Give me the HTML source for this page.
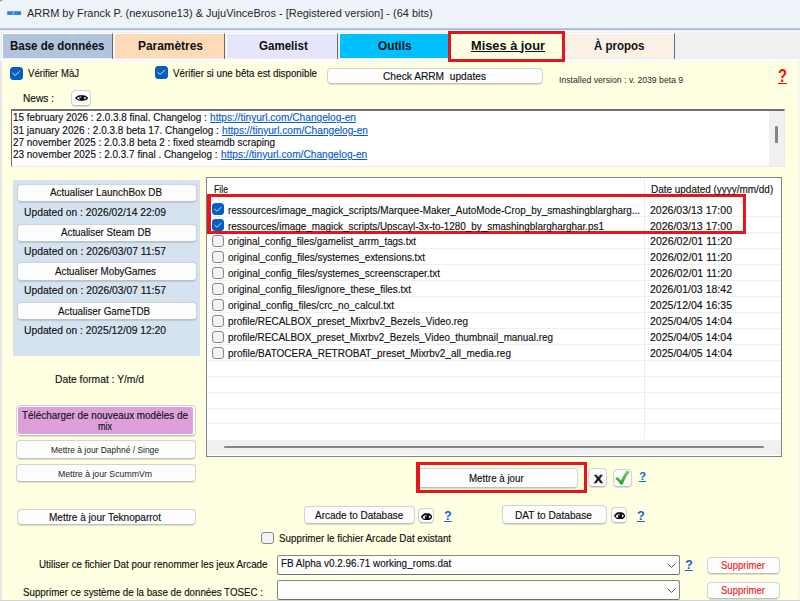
<!DOCTYPE html>
<html lang="fr"><head><meta charset="utf-8"><title>ARRM</title><style>
html,body{margin:0;padding:0;background:#ffffe1}
body{width:800px;height:601px;overflow:hidden;position:relative;background:#ffffe1;font-family:"Liberation Sans", Arial, sans-serif;color:#151515}
div{position:absolute}
.t{position:absolute;white-space:pre;transform-origin:0 50%;color:#101010;-webkit-text-stroke:0.16px currentColor}
.btn{background:#fdfdfd;border:1px solid #d3d3d3;border-bottom-color:#c0c0c0;border-radius:4.5px;box-sizing:border-box;box-shadow:0 0.6px 0.8px rgba(0,0,0,.13)}
.tab{box-sizing:border-box;border-right:1.5px solid #6a6a6a;border-left:1px solid #fff;border-top:1px solid #fff}
.cb{box-sizing:border-box;border:1px solid #878787;border-radius:3px;background:#f4f4f4}
.cb.on{background:#065fbe;border-color:#065fbe}
.cb svg{position:absolute;left:-1px;top:-1px}
</style></head>
<body>
<div class="" style="left:0px;top:0px;width:800px;height:28px;background:#eef3f9;"></div>
<div class="" style="left:0px;top:27.8px;width:800px;height:2.3px;background:linear-gradient(#c4d4ea,#a3bcde 45%,#a9c1e2);"></div>
<div class="" style="left:0px;top:30px;width:800px;height:32px;background:#f0f0f0;"></div>
<div class="" style="left:0px;top:31px;width:800px;height:1px;background:#fbfbfb;"></div>
<div class="" style="left:0px;top:61.5px;width:800px;height:539.5px;background:#ffffe1;"></div>
<div class="" style="left:0px;top:59px;width:800px;height:2.5px;background:#fafafa;"></div>
<div class="" style="left:0px;top:61px;width:2.8px;height:540px;background:linear-gradient(90deg,#e2e2e2,#f8f8f6);"></div>
<div class="" style="left:797.5px;top:61px;width:2.5px;height:540px;background:#f6f6ea;"></div>
<div class="" style="left:0px;top:600px;width:800px;height:1px;background:#d4d4cc;"></div>
<div class="tab" style="left:1.7px;top:33px;width:111.3px;height:25.1px;background:#b0c4de;"></div>
<div class="" style="left:111.5px;top:58px;width:1.5px;height:1.3px;background:#7a7a7a;"></div>
<div class="tab" style="left:113.6px;top:33px;width:111.8px;height:25.1px;background:#ffdab9;"></div>
<div class="" style="left:223.9px;top:58px;width:1.5px;height:1.3px;background:#7a7a7a;"></div>
<div class="tab" style="left:225.6px;top:33px;width:112.6px;height:25.1px;background:#e6e6fa;"></div>
<div class="" style="left:336.7px;top:58px;width:1.5px;height:1.3px;background:#7a7a7a;"></div>
<div class="tab" style="left:338.6px;top:33px;width:110.4px;height:25.1px;background:#00bfff;"></div>
<div class="" style="left:447.5px;top:58px;width:1.5px;height:1.3px;background:#7a7a7a;"></div>
<div class="tab" style="left:564px;top:33px;width:111px;height:25.1px;background:#faf0e6;"></div>
<div class="" style="left:673.5px;top:58px;width:1.5px;height:1.3px;background:#7a7a7a;"></div>
<div class="" style="left:447.7px;top:30.8px;width:117.1px;height:31.2px;background:#ffffe1;border:3.5px solid #e8141c;box-sizing:border-box;"></div>
<div class="cb on" style="left:10px;top:67.3px;width:12.5px;height:12.5px"><svg viewBox="0 0 12 12" width="12.5" height="12.5"><path d="M2.7 6.2 L5 8.15 L9.1 4.3" fill="none" stroke="#e4eefb" stroke-width="0.85" stroke-linecap="round" stroke-linejoin="round"/></svg></div>
<div class="cb on" style="left:155px;top:66.3px;width:12.5px;height:12.5px"><svg viewBox="0 0 12 12" width="12.5" height="12.5"><path d="M2.7 6.2 L5 8.15 L9.1 4.3" fill="none" stroke="#e4eefb" stroke-width="0.85" stroke-linecap="round" stroke-linejoin="round"/></svg></div>
<div class="btn" style="left:327.3px;top:67.7px;width:216.1px;height:16.6px;"></div>
<div class="btn" style="left:71.2px;top:90.4px;width:19.5px;height:15.2px;"></div>
<svg viewBox="0 0 16 10" preserveAspectRatio="none" width="13.2" height="5.9" style="position:absolute;left:74.95px;top:95.05px"><path d="M0 5 C1.2 3 3.4 0.3 6 0.3 L10 0.3 C12.6 0.3 14.8 3 16 5 C14.8 7 12.6 9.7 10 9.7 L6 9.7 C3.4 9.7 1.2 7 0 5Z" fill="#0a0a0a"/><path d="M2.3 5.6 C3 4.2 4.2 3.2 5.7 2.8 C5 4.6 5.2 6.4 6.2 8 C4.6 7.6 3.1 6.8 2.3 5.6Z M13.8 5.1 C13.2 4 12.2 3.2 11 2.8 C11.6 4.4 11.5 6 10.7 7.5 C12 7.1 13.2 6.2 13.8 5.1Z" fill="#fff"/><circle cx="7" cy="3.6" r="1" fill="#f4f4f4"/></svg>
<div class="" style="left:10.6px;top:108.6px;width:774.1px;height:58px;background:#fff;border-top:2px solid #6f6f6f;border-left:1.6px solid #6f6f6f;border-right:1px solid #ececec;border-bottom:1px solid #ececec;box-sizing:border-box;"></div>
<div class="" style="left:769.2px;top:110.8px;width:14.6px;height:54.9px;background:#f0f0f0;"></div>
<div class="" style="left:775.4px;top:126px;width:2.3px;height:17.4px;background:#858585;border-radius:1px;"></div>
<div class="" style="left:13px;top:180px;width:187px;height:175.8px;background:#d5e3f1;"></div>
<div class="btn" style="left:17px;top:183.7px;width:180px;height:18.8px;"></div>
<div class="btn" style="left:17px;top:223.7px;width:180px;height:18.3px;"></div>
<div class="btn" style="left:17px;top:262.2px;width:180px;height:18.8px;"></div>
<div class="btn" style="left:17px;top:301.7px;width:180px;height:18.3px;"></div>
<div class="btn" style="left:16.2px;top:404.6px;width:180.2px;height:31.6px;"></div>
<div class="" style="left:18.4px;top:406.9px;width:174.4px;height:27px;background:#dda0dd;border-radius:2px;"></div>
<div class="btn" style="left:16.2px;top:440.4px;width:180.2px;height:18.5px;"></div>
<div class="btn" style="left:16.2px;top:463.5px;width:180.2px;height:18.5px;"></div>
<div class="btn" style="left:17.2px;top:508.5px;width:179.2px;height:16.5px;"></div>
<div class="" style="left:206px;top:177px;width:575.5px;height:279.7px;background:#fff;border:1px solid #7f858d;box-sizing:border-box;"></div>
<div class="" style="left:207px;top:216.1px;width:573.5px;height:1px;background:#f0f0f0;"></div>
<div class="" style="left:207px;top:232.05px;width:573.5px;height:1px;background:#f0f0f0;"></div>
<div class="" style="left:207px;top:248px;width:573.5px;height:1px;background:#f0f0f0;"></div>
<div class="" style="left:207px;top:263.95px;width:573.5px;height:1px;background:#f0f0f0;"></div>
<div class="" style="left:207px;top:279.9px;width:573.5px;height:1px;background:#f0f0f0;"></div>
<div class="" style="left:207px;top:295.85px;width:573.5px;height:1px;background:#f0f0f0;"></div>
<div class="" style="left:207px;top:311.8px;width:573.5px;height:1px;background:#f0f0f0;"></div>
<div class="" style="left:207px;top:327.75px;width:573.5px;height:1px;background:#f0f0f0;"></div>
<div class="" style="left:207px;top:343.7px;width:573.5px;height:1px;background:#f0f0f0;"></div>
<div class="" style="left:207px;top:359.65px;width:573.5px;height:1px;background:#f0f0f0;"></div>
<div class="" style="left:207px;top:375.6px;width:573.5px;height:1px;background:#f0f0f0;"></div>
<div class="" style="left:207px;top:391.55px;width:573.5px;height:1px;background:#f0f0f0;"></div>
<div class="" style="left:207px;top:407.5px;width:573.5px;height:1px;background:#f0f0f0;"></div>
<div class="" style="left:207px;top:423.45px;width:573.5px;height:1px;background:#f0f0f0;"></div>
<div class="" style="left:643.6px;top:179px;width:1.1px;height:260px;background:#ebebeb;"></div>
<div class="" style="left:207px;top:440px;width:573.5px;height:15px;background:#f0f0f0;"></div>
<div class="" style="left:224px;top:446.2px;width:539.5px;height:2.1px;background:#858585;border-radius:1px;"></div>
<div class="cb on" style="left:211.7px;top:203.25px;width:12px;height:12px"><svg viewBox="0 0 12 12" width="12" height="12"><path d="M2.7 6.2 L5 8.15 L9.1 4.3" fill="none" stroke="#e4eefb" stroke-width="0.85" stroke-linecap="round" stroke-linejoin="round"/></svg></div>
<div class="cb on" style="left:211.7px;top:219.2px;width:12px;height:12px"><svg viewBox="0 0 12 12" width="12" height="12"><path d="M2.7 6.2 L5 8.15 L9.1 4.3" fill="none" stroke="#e4eefb" stroke-width="0.85" stroke-linecap="round" stroke-linejoin="round"/></svg></div>
<div class="cb" style="left:211.7px;top:235.15px;width:12px;height:12px"></div>
<div class="cb" style="left:211.7px;top:251.1px;width:12px;height:12px"></div>
<div class="cb" style="left:211.7px;top:267.05px;width:12px;height:12px"></div>
<div class="cb" style="left:211.7px;top:283px;width:12px;height:12px"></div>
<div class="cb" style="left:211.7px;top:298.95px;width:12px;height:12px"></div>
<div class="cb" style="left:211.7px;top:314.9px;width:12px;height:12px"></div>
<div class="cb" style="left:211.7px;top:330.85px;width:12px;height:12px"></div>
<div class="cb" style="left:211.7px;top:346.8px;width:12px;height:12px"></div>
<div class="" style="left:207px;top:193.6px;width:539.3px;height:40.4px;border:3.7px solid #e8141c;border-left-width:4px;box-sizing:border-box;"></div>
<div class="btn" style="left:417px;top:467.7px;width:160.8px;height:20.1px;"></div>
<div class="" style="left:416px;top:462.2px;width:170.6px;height:30.8px;border:solid #e8141c;border-width:3.4px 3.8px 3.5px 4.1px;box-sizing:border-box;"></div>
<div class="btn" style="left:588.3px;top:468.4px;width:19.2px;height:19.1px;"></div>
<div class="btn" style="left:613px;top:468.5px;width:19px;height:18.9px;"></div>
<svg viewBox="610 465 25 25" width="25" height="25" style="position:absolute;left:610px;top:465px"><defs><linearGradient id="gk" x1="0" y1="0" x2="0" y2="1"><stop offset="0" stop-color="#6fd85a"/><stop offset="1" stop-color="#2a9a2c"/></linearGradient></defs><path d="M615.1 478.6 L617.4 477 L621.1 480.6 C622.6 477 624.6 473.4 627.2 470.6 L629.8 471.9 C626.6 475.4 624.4 479.8 622.6 484.6 L620.4 484.6 C619.2 482.4 617.4 480.4 615.1 478.6Z" fill="url(#gk)"/></svg>
<div class="btn" style="left:304px;top:505.5px;width:110.6px;height:18.7px;"></div>
<div class="btn" style="left:418.4px;top:507.5px;width:16px;height:15.9px;"></div>
<svg viewBox="0 0 16 10" preserveAspectRatio="none" width="11.6" height="7.6" style="position:absolute;left:420.8px;top:512.55px"><path d="M0 5 C1.2 3 3.4 0.3 6 0.3 L10 0.3 C12.6 0.3 14.8 3 16 5 C14.8 7 12.6 9.7 10 9.7 L6 9.7 C3.4 9.7 1.2 7 0 5Z" fill="#0a0a0a"/><path d="M2.3 5.6 C3 4.2 4.2 3.2 5.7 2.8 C5 4.6 5.2 6.4 6.2 8 C4.6 7.6 3.1 6.8 2.3 5.6Z M13.8 5.1 C13.2 4 12.2 3.2 11 2.8 C11.6 4.4 11.5 6 10.7 7.5 C12 7.1 13.2 6.2 13.8 5.1Z" fill="#fff"/><circle cx="7" cy="3.6" r="1" fill="#f4f4f4"/></svg>
<div class="btn" style="left:501.5px;top:505.2px;width:105.7px;height:18.4px;"></div>
<div class="btn" style="left:611.2px;top:506.8px;width:16.2px;height:15.8px;"></div>
<svg viewBox="0 0 16 10" preserveAspectRatio="none" width="11.6" height="7.6" style="position:absolute;left:613.7px;top:511.8px"><path d="M0 5 C1.2 3 3.4 0.3 6 0.3 L10 0.3 C12.6 0.3 14.8 3 16 5 C14.8 7 12.6 9.7 10 9.7 L6 9.7 C3.4 9.7 1.2 7 0 5Z" fill="#0a0a0a"/><path d="M2.3 5.6 C3 4.2 4.2 3.2 5.7 2.8 C5 4.6 5.2 6.4 6.2 8 C4.6 7.6 3.1 6.8 2.3 5.6Z M13.8 5.1 C13.2 4 12.2 3.2 11 2.8 C11.6 4.4 11.5 6 10.7 7.5 C12 7.1 13.2 6.2 13.8 5.1Z" fill="#fff"/><circle cx="7" cy="3.6" r="1" fill="#f4f4f4"/></svg>
<div class="cb" style="left:261px;top:531.6px;width:12.7px;height:12.7px"></div>
<div class="" style="left:277px;top:555px;width:403px;height:19.8px;background:#fff;border:1.2px solid #858585;border-bottom-color:#6e6e6e;border-radius:2.5px;box-sizing:border-box;"></div>
<svg viewBox="0 0 10 6" width="9" height="5.4" style="position:absolute;left:666.5px;top:562.7px"><path d="M0.7 0.7 L5 5 L9.3 0.7" fill="none" stroke="#555" stroke-width="1.1"/></svg>
<div class="" style="left:277px;top:580.2px;width:403px;height:20px;background:#fff;border:1.2px solid #858585;border-bottom-color:#6e6e6e;border-radius:2.5px;box-sizing:border-box;"></div>
<svg viewBox="0 0 10 6" width="9" height="5.4" style="position:absolute;left:666.5px;top:588px"><path d="M0.7 0.7 L5 5 L9.3 0.7" fill="none" stroke="#555" stroke-width="1.1"/></svg>
<div class="btn" style="left:707.2px;top:556.6px;width:73.2px;height:17.1px;"></div>
<div class="btn" style="left:707.2px;top:581.6px;width:73.2px;height:17.1px;"></div>
<svg viewBox="0 0 30 24" width="30" height="24" style="position:absolute;left:0;top:0"><rect x="7" y="10.9" width="14.2" height="4" rx="0.6" fill="#43a0f3"/><path d="M7.6 14.3 L8.8 11.8 L10 14.3Z M10.4 14.4 V12.3 H12.3 V13.2 H11.4 V14.4Z M14.4 14.4 V12.3 H16.3 V13.2 H15.4 V14.4Z M16.9 14.4 V12.2 H17.8 L18.5 13.3 L19.2 12.2 H20.4 V14.4 H19.6 V13.4 L18.8 14.4 H18.2 L17.6 13.4 V14.4Z" fill="#1b5cc2" opacity="0.85"/><rect x="12.9" y="11.6" width="1.3" height="2.6" fill="#7fd0ff" opacity="0.8"/><path d="M0 0 H2.2 L0 2Z" fill="#e8a030"/><path d="M1 0 H2.4 L1.6 1.4Z" fill="#3a6fd0"/></svg>
<span class="t" style="left:27.40px;top:6.20px;font-size:11.8px;line-height:15px;transform:scaleX(0.9298);color:#262626;-webkit-text-stroke:0;">ARRM by Franck P. (nexusone13) &amp; JujuVinceBros - [Registered version] - (64 bits)</span>
<span class="t" style="left:10.00px;top:37.50px;font-size:12px;line-height:16px;transform:scaleX(0.9574);font-weight:bold;color:#101010;-webkit-text-stroke:0;">Base de données</span>
<span class="t" style="left:138.00px;top:37.50px;font-size:12px;line-height:16px;transform:scaleX(0.9940);font-weight:bold;color:#101010;-webkit-text-stroke:0;">Paramètres</span>
<span class="t" style="left:258.75px;top:37.50px;font-size:12px;line-height:16px;transform:scaleX(0.9615);font-weight:bold;color:#101010;-webkit-text-stroke:0;">Gamelist</span>
<span class="t" style="left:377.50px;top:37.50px;font-size:12px;line-height:16px;transform:scaleX(0.9848);font-weight:bold;color:#101010;-webkit-text-stroke:0;">Outils</span>
<span class="t" style="left:594.00px;top:37.50px;font-size:12px;line-height:16px;transform:scaleX(0.9588);font-weight:bold;color:#101010;-webkit-text-stroke:0;">À propos</span>
<span class="t" style="left:471.00px;top:37.50px;font-size:12px;line-height:16px;transform:scaleX(1.0669);font-weight:bold;color:#101010;text-decoration:underline;text-decoration-thickness:1.4px;-webkit-text-stroke:0;">Mises à jour</span>
<span class="t" style="left:28.00px;top:66.00px;font-size:11.8px;line-height:15px;transform:scaleX(0.8103);">Vérifier MàJ</span>
<span class="t" style="left:172.50px;top:65.50px;font-size:11.8px;line-height:15px;transform:scaleX(0.8286);">Vérifier si une bêta est disponible</span>
<span class="t" style="left:383.00px;top:68.50px;font-size:11.8px;line-height:15px;transform:scaleX(0.8631);">Check ARRM  updates</span>
<span class="t" style="left:559.40px;top:74.20px;font-size:9px;line-height:12px;transform:scaleX(0.9634);color:#2a2a2a;-webkit-text-stroke:0;">Installed version : v. 2039 beta 9</span>
<span class="t" style="left:777.90px;top:62.80px;font-size:19px;line-height:25px;transform:scaleX(0.7752);font-weight:bold;color:#ff0808;text-decoration:underline;-webkit-text-stroke:0;">?</span>
<span class="t" style="left:23.00px;top:91.10px;font-size:11.8px;line-height:15px;transform:scaleX(0.8596);">News :</span>
<span class="t" style="left:12.90px;top:110.30px;font-size:11.8px;line-height:15px;transform:scaleX(0.8419);">15 february 2026 : 2.0.3.8 final. Changelog :</span>
<span class="t" style="left:210.00px;top:110.30px;font-size:11.8px;line-height:15px;transform:scaleX(0.8596);color:#0a5ad0;text-decoration:underline;">https://tinyurl.com/Changelog-en</span>
<span class="t" style="left:12.90px;top:122.80px;font-size:11.8px;line-height:15px;transform:scaleX(0.8457);">31 january 2026 : 2.0.3.8 beta 17. Changelog :</span>
<span class="t" style="left:222.00px;top:122.80px;font-size:11.8px;line-height:15px;transform:scaleX(0.8596);color:#0a5ad0;text-decoration:underline;">https://tinyurl.com/Changelog-en</span>
<span class="t" style="left:12.90px;top:135.00px;font-size:11.8px;line-height:15px;transform:scaleX(0.8414);">27 november 2025 : 2.0.3.8 beta 2 : fixed steamdb scraping</span>
<span class="t" style="left:12.90px;top:147.10px;font-size:11.8px;line-height:15px;transform:scaleX(0.8429);">23 november 2025 : 2.0.3.7 final . Changelog :</span>
<span class="t" style="left:220.75px;top:147.10px;font-size:11.8px;line-height:15px;transform:scaleX(0.8611);color:#0a5ad0;text-decoration:underline;">https://tinyurl.com/Changelog-en</span>
<span class="t" style="left:50.00px;top:185.20px;font-size:11.8px;line-height:15px;transform:scaleX(0.8372);">Actualiser LaunchBox DB</span>
<span class="t" style="left:24.00px;top:204.50px;font-size:11.8px;line-height:15px;transform:scaleX(0.8728);">Updated on : 2026/02/14 22:09</span>
<span class="t" style="left:61.00px;top:224.90px;font-size:11.8px;line-height:15px;transform:scaleX(0.8269);">Actualiser Steam DB</span>
<span class="t" style="left:24.00px;top:243.50px;font-size:11.8px;line-height:15px;transform:scaleX(0.8776);">Updated on : 2026/03/07 11:57</span>
<span class="t" style="left:55.00px;top:264.00px;font-size:11.8px;line-height:15px;transform:scaleX(0.8282);">Actualiser MobyGames</span>
<span class="t" style="left:24.00px;top:283.00px;font-size:11.8px;line-height:15px;transform:scaleX(0.8776);">Updated on : 2026/03/07 11:57</span>
<span class="t" style="left:58.00px;top:304.00px;font-size:11.8px;line-height:15px;transform:scaleX(0.8303);">Actualiser GameTDB</span>
<span class="t" style="left:24.00px;top:322.50px;font-size:11.8px;line-height:15px;transform:scaleX(0.8728);">Updated on : 2025/12/09 12:20</span>
<span class="t" style="left:55.00px;top:371.50px;font-size:11.8px;line-height:15px;transform:scaleX(0.8720);">Date format : Y/m/d</span>
<span class="t" style="left:22.00px;top:407.50px;font-size:11.8px;line-height:15px;transform:scaleX(0.8381);">Télécharger de nouveaux modèles de</span>
<span class="t" style="left:98.00px;top:419.30px;font-size:11.8px;line-height:15px;transform:scaleX(0.7626);">mix</span>
<span class="t" style="left:51.00px;top:444.00px;font-size:9.5px;line-height:12px;transform:scaleX(0.8891);color:#222;-webkit-text-stroke:0;">Mettre à jour Daphné / Singe</span>
<span class="t" style="left:58.00px;top:467.50px;font-size:9.5px;line-height:12px;transform:scaleX(0.9178);color:#222;-webkit-text-stroke:0;">Mettre à jour ScummVm</span>
<span class="t" style="left:49.00px;top:509.50px;font-size:11.8px;line-height:15px;transform:scaleX(0.8511);">Mettre à jour Teknoparrot</span>
<span class="t" style="left:214.00px;top:182.00px;font-size:11.8px;line-height:15px;transform:scaleX(0.7362);">File</span>
<span class="t" style="left:650.80px;top:182.10px;font-size:11.8px;line-height:15px;transform:scaleX(0.8433);">Date updated (yyyy/mm/dd)</span>
<span class="t" style="left:228.00px;top:202.55px;font-size:11.8px;line-height:15px;transform:scaleX(0.8412);">ressources/image_magick_scripts/Marquee-Maker_AutoMode-Crop_by_smashingblargharg...</span>
<span class="t" style="left:650.00px;top:202.55px;font-size:11.8px;line-height:15px;transform:scaleX(0.8928);">2026/03/13 17:00</span>
<span class="t" style="left:228.00px;top:218.50px;font-size:11.8px;line-height:15px;transform:scaleX(0.8396);">ressources/image_magick_scripts/Upscayl-3x-to-1280_by_smashingblargharghar.ps1</span>
<span class="t" style="left:650.00px;top:218.50px;font-size:11.8px;line-height:15px;transform:scaleX(0.8928);">2026/03/13 17:00</span>
<span class="t" style="left:228.00px;top:234.45px;font-size:11.8px;line-height:15px;transform:scaleX(0.8311);">original_config_files/gamelist_arrm_tags.txt</span>
<span class="t" style="left:650.00px;top:234.45px;font-size:11.8px;line-height:15px;transform:scaleX(0.9014);">2026/02/01 11:20</span>
<span class="t" style="left:228.00px;top:250.40px;font-size:11.8px;line-height:15px;transform:scaleX(0.8369);">original_config_files/systemes_extensions.txt</span>
<span class="t" style="left:650.00px;top:250.40px;font-size:11.8px;line-height:15px;transform:scaleX(0.9014);">2026/02/01 11:20</span>
<span class="t" style="left:228.00px;top:266.35px;font-size:11.8px;line-height:15px;transform:scaleX(0.8376);">original_config_files/systemes_screenscraper.txt</span>
<span class="t" style="left:650.00px;top:266.35px;font-size:11.8px;line-height:15px;transform:scaleX(0.9014);">2026/02/01 11:20</span>
<span class="t" style="left:228.00px;top:282.30px;font-size:11.8px;line-height:15px;transform:scaleX(0.8380);">original_config_files/ignore_these_files.txt</span>
<span class="t" style="left:650.00px;top:282.30px;font-size:11.8px;line-height:15px;transform:scaleX(0.8928);">2026/01/03 18:42</span>
<span class="t" style="left:228.00px;top:298.25px;font-size:11.8px;line-height:15px;transform:scaleX(0.8523);">original_config_files/crc_no_calcul.txt</span>
<span class="t" style="left:650.00px;top:298.25px;font-size:11.8px;line-height:15px;transform:scaleX(0.8928);">2025/12/04 16:35</span>
<span class="t" style="left:228.00px;top:314.20px;font-size:11.8px;line-height:15px;transform:scaleX(0.8401);">profile/RECALBOX_preset_Mixrbv2_Bezels_Video.reg</span>
<span class="t" style="left:650.00px;top:314.20px;font-size:11.8px;line-height:15px;transform:scaleX(0.8928);">2025/04/05 14:04</span>
<span class="t" style="left:228.00px;top:330.15px;font-size:11.8px;line-height:15px;transform:scaleX(0.8362);">profile/RECALBOX_preset_Mixrbv2_Bezels_Video_thumbnail_manual.reg</span>
<span class="t" style="left:650.00px;top:330.15px;font-size:11.8px;line-height:15px;transform:scaleX(0.8928);">2025/04/05 14:04</span>
<span class="t" style="left:228.00px;top:346.10px;font-size:11.8px;line-height:15px;transform:scaleX(0.8480);">profile/BATOCERA_RETROBAT_preset_Mixrbv2_all_media.reg</span>
<span class="t" style="left:650.00px;top:346.10px;font-size:11.8px;line-height:15px;transform:scaleX(0.8928);">2025/04/05 14:04</span>
<span class="t" style="left:469.30px;top:470.50px;font-size:11.8px;line-height:15px;transform:scaleX(0.8259);">Mettre à jour</span>
<span class="t" style="left:593.90px;top:471.80px;font-size:11.3px;line-height:15px;transform:scaleX(1.1528);font-weight:bold;-webkit-text-stroke:0.45px currentColor;">X</span>
<span class="t" style="left:314.75px;top:507.80px;font-size:11.8px;line-height:15px;transform:scaleX(0.8463);">Arcade to Database</span>
<span class="t" style="left:514.80px;top:507.50px;font-size:11.8px;line-height:15px;transform:scaleX(0.8612);">DAT to Database</span>
<span class="t" style="left:278.90px;top:530.50px;font-size:11.8px;line-height:15px;transform:scaleX(0.8306);">Supprimer le fichier Arcade Dat existant</span>
<span class="t" style="left:38.50px;top:556.50px;font-size:11.8px;line-height:15px;transform:scaleX(0.8298);">Utiliser ce fichier Dat pour renommer les jeux Arcade</span>
<span class="t" style="left:280.80px;top:556.30px;font-size:11.8px;line-height:15px;transform:scaleX(0.8399);">FB Alpha v0.2.96.71 working_roms.dat</span>
<span class="t" style="left:23.00px;top:585.00px;font-size:11.8px;line-height:15px;transform:scaleX(0.8274);">Supprimer ce système de la base de données TOSEC :</span>
<span class="t" style="left:721.00px;top:557.50px;font-size:11.8px;line-height:15px;transform:scaleX(0.8085);color:#f01818;">Supprimer</span>
<span class="t" style="left:721.00px;top:583.00px;font-size:11.8px;line-height:15px;transform:scaleX(0.8085);color:#f01818;">Supprimer</span>
<span class="t" style="left:639.00px;top:468.70px;font-size:11px;line-height:14px;transform:scaleX(1.0691);font-weight:bold;color:#1464d8;text-decoration:underline;-webkit-text-stroke:0;">?</span>
<span class="t" style="left:444.10px;top:507.10px;font-size:13px;line-height:17px;transform:scaleX(0.9807);font-weight:bold;color:#1464d8;text-decoration:underline;-webkit-text-stroke:0;">?</span>
<span class="t" style="left:637.10px;top:506.50px;font-size:13px;line-height:17px;transform:scaleX(0.9807);font-weight:bold;color:#1464d8;text-decoration:underline;-webkit-text-stroke:0;">?</span>
<span class="t" style="left:685.10px;top:555.80px;font-size:13px;line-height:17px;transform:scaleX(0.9807);font-weight:bold;color:#1464d8;text-decoration:underline;-webkit-text-stroke:0;">?</span>
</body></html>
